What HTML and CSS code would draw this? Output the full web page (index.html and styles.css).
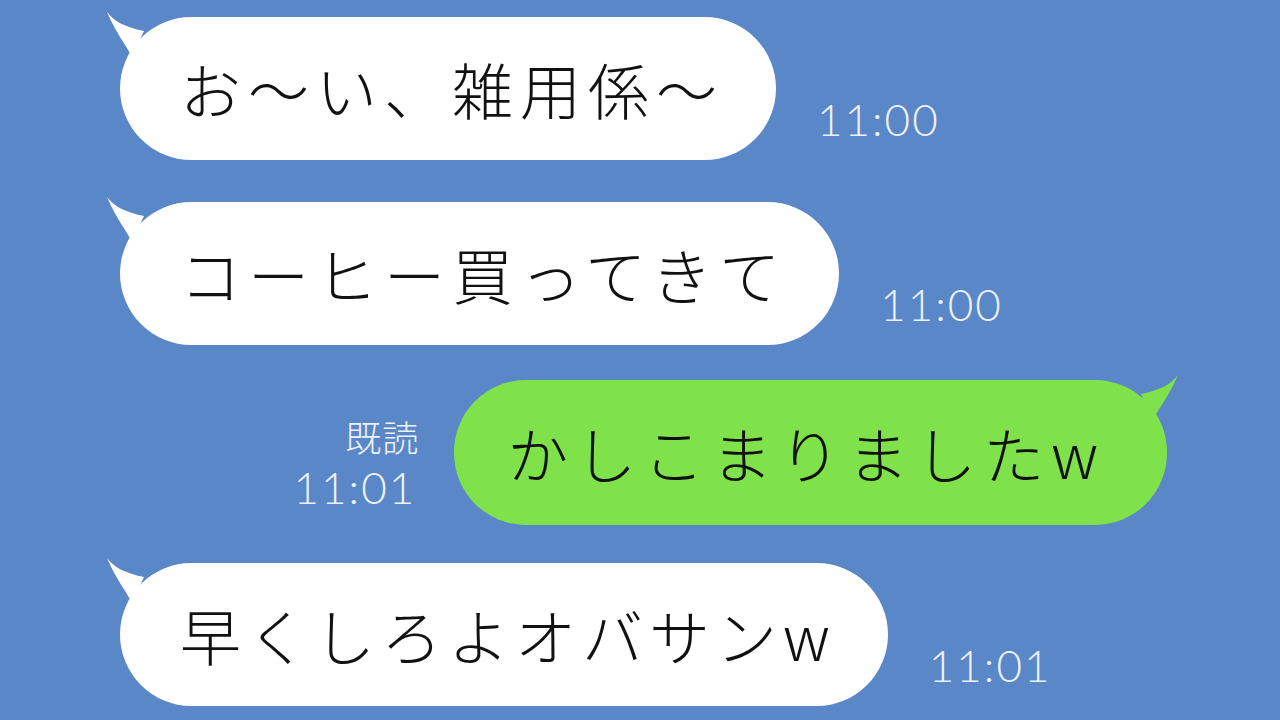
FILE: index.html
```html
<!DOCTYPE html>
<html lang="ja">
<head>
<meta charset="utf-8">
<link rel="stylesheet" href="styles.css">
</head>
<body>
<main class="chat">
  <div class="row row-in r1">
    <div class="bubble bubble-in">
      <svg class="tail tail-in" viewBox="0 0 50 50" width="50" height="50"><path d="M3 3 C10 12 20 18 40 22 L28 48 C22 36 12 24 3 3 Z"/></svg>
      <span class="msg">お〜い、雑用係〜</span>
    </div>
    <div class="meta"><span class="time">11:00</span></div>
  </div>
  <div class="row row-in r2">
    <div class="bubble bubble-in">
      <svg class="tail tail-in" viewBox="0 0 50 50" width="50" height="50"><path d="M3 3 C10 12 20 18 40 22 L28 48 C22 36 12 24 3 3 Z"/></svg>
      <span class="msg">コーヒー買ってきて</span>
    </div>
    <div class="meta"><span class="time">11:00</span></div>
  </div>
  <div class="row row-out r3">
    <div class="meta meta-out"><span class="read">既読</span><span class="time">11:01</span></div>
    <div class="bubble bubble-out">
      <svg class="tail tail-out" viewBox="0 0 50 50" width="50" height="50"><path d="M47 3 C40 12 30 18 10 22 L22 48 C28 36 38 24 47 3 Z"/></svg>
      <span class="msg">かしこまりましたw</span>
    </div>
  </div>
  <div class="row row-in r4">
    <div class="bubble bubble-in">
      <svg class="tail tail-in" viewBox="0 0 50 50" width="50" height="50"><path d="M3 3 C10 12 20 18 40 22 L28 48 C22 36 12 24 3 3 Z"/></svg>
      <span class="msg msg-tight">早くしろよオバサンw</span>
    </div>
    <div class="meta"><span class="time">11:01</span></div>
  </div>
</main>
</body>
</html>
```
FILE: styles.css
```css
html, body {
  margin: 0;
  padding: 0;
}
body {
  width: 1280px;
  height: 720px;
  overflow: hidden;
  background: #5a87c8;
  font-family: "Noto Sans CJK JP", "Noto Sans", sans-serif;
}
.chat {
  display: flex;
  flex-direction: column;
  padding-top: 17px;
}
.row {
  display: flex;
  align-items: flex-end;
}
.row-in {
  padding-left: 120px;
}
.row-out {
  justify-content: flex-end;
  padding-right: 113px;
}
.r2 { margin-top: 42px; }
.r3 { margin-top: 35px; }
.r4 { margin-top: 38px; }
.bubble {
  position: relative;
  height: 143px;
  border-radius: 72px;
  display: flex;
  align-items: center;
  padding: 0 52px 0 60px;
}
.bubble-in {
  background: #ffffff;
}
.bubble-out {
  background: #7fe24b;
  height: 145px;
  padding: 0 62px 0 53px;
}
.msg {
  font-size: 61px;
  font-weight: 300;
  letter-spacing: 7px;
  color: #111;
  line-height: 1;
  white-space: nowrap;
}
.msg-tight {
  letter-spacing: 6px;
}
.tail {
  position: absolute;
  top: -8px;
}
.tail-in {
  left: -16px;
  fill: #ffffff;
}
.tail-out {
  right: -14px;
  fill: #7fe24b;
}
.meta {
  display: flex;
  flex-direction: column;
  margin-left: 41px;
  margin-bottom: 17px;
  color: #eef2f8;
  font-family: "Lato", "Noto Sans CJK JP", sans-serif;
  font-weight: 300;
}
.meta-out {
  margin-left: 0;
  margin-right: 38px;
  align-items: flex-end;
  margin-bottom: 14px;
}
.time {
  font-size: 44px;
  letter-spacing: 2px;
  line-height: 1.1;
}
.read {
  font-family: "Noto Sans CJK JP", sans-serif;
  font-size: 36px;
  line-height: 1.45;
  letter-spacing: 1px;
  margin-right: -3px;
}
```
